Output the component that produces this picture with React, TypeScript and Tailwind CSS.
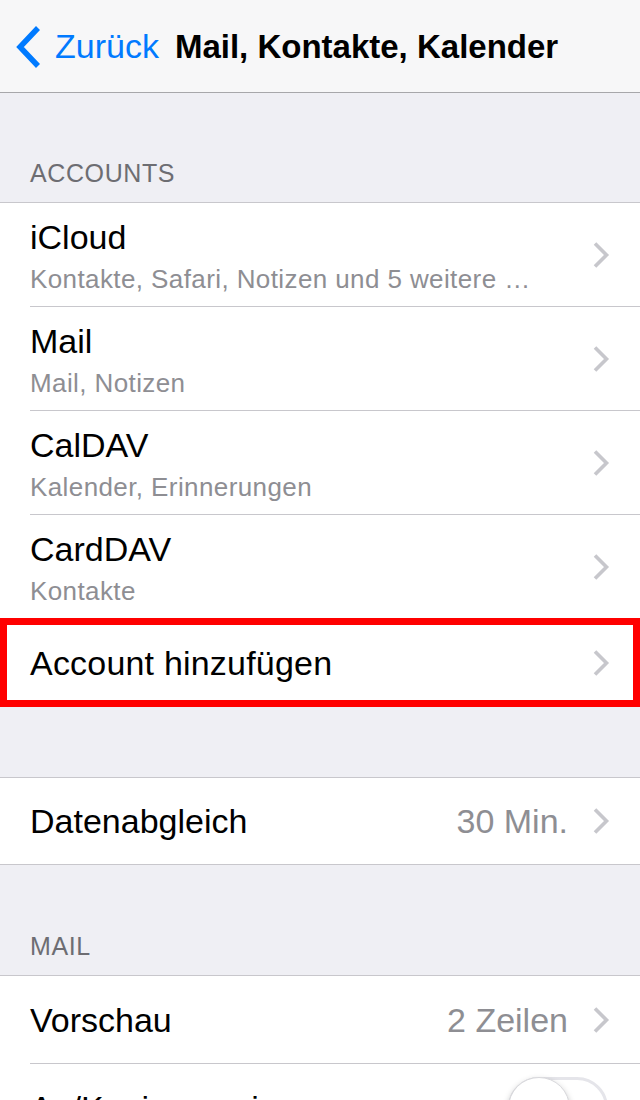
import React from "react";

const font = { fontFamily: '"Liberation Sans", Arial, sans-serif' };

function Chevron() {
  return (
    <svg width="18" height="28" viewBox="0 0 18 28" className="shrink-0">
      <path
        d="M3 2.5 L14.5 14 L3 25.5"
        fill="none"
        stroke="#c7c7cc"
        strokeWidth="3.6"
        strokeLinecap="butt"
      />
    </svg>
  );
}

function SectionHeader({ label, height }: { label?: string; height: string }) {
  return (
    <div className={`${height} bg-[#efeff4] border-b border-[#c8c7cc] flex items-end px-[30px] pb-[14px]`}>
      {label && (
        <span className="text-[25px] leading-[30px] text-[#6d6d72] tracking-[0.6px]">{label}</span>
      )}
    </div>
  );
}

interface AccountRow {
  title: string;
  sub: string;
}

const accounts: AccountRow[] = [
  { title: "iCloud", sub: "Kontakte, Safari, Notizen und 5 weitere …" },
  { title: "Mail", sub: "Mail, Notizen" },
  { title: "CalDAV", sub: "Kalender, Erinnerungen" },
  { title: "CardDAV", sub: "Kontakte" },
];

export default function App() {
  return (
    <div style={font} className="w-[640px] h-[1100px] overflow-hidden bg-[#efeff4] text-black">
      {/* nav bar */}
      <div className="h-[93px] bg-[#f7f7f8] border-b border-[#a7a7aa] flex items-center pl-[14px]">
        <svg width="30" height="44" viewBox="0 0 30 44" className="shrink-0 mt-[2px]">
          <path d="M24 3 L6 22 L24 41" fill="none" stroke="#007aff" strokeWidth="5.5" />
        </svg>
        <span className="ml-[11px] text-[34px] text-[#007aff] leading-none">Zurück</span>
        <span className="ml-[16px] text-[33px] font-bold leading-none">Mail, Kontakte, Kalender</span>
      </div>

      <SectionHeader label="ACCOUNTS" height="h-[110px]" />

      <div className="bg-white">
        {accounts.map((a) => (
          <div key={a.title} className="pl-[30px]">
            <div className="h-[104px] border-b border-[#c8c7cc] flex items-center pr-[30px]">
              <div className="flex-1 min-w-0 pt-[2px]">
                <div className="text-[34px] leading-[40px]">{a.title}</div>
                <div className="text-[26px] leading-[32px] mt-[6px] text-[#8e8e93] tracking-[0.4px]">{a.sub}</div>
              </div>
              <Chevron />
            </div>
          </div>
        ))}
        <div className="relative h-[88px] border-b border-[#c8c7cc] flex items-center pl-[30px] pr-[30px]">
          <span className="flex-1 text-[34px] leading-[40px] tracking-[0.2px]">Account hinzufügen</span>
          <Chevron />
          <div className="absolute left-0 top-[-1px] w-[640px] h-[89px] border-[7px] border-[#ff0000]" />
        </div>
      </div>

      <SectionHeader height="h-[71px]" />

      <div className="bg-white h-[87px] border-b border-[#c8c7cc] flex items-center pl-[30px] pr-[30px]">
        <span className="flex-1 text-[34px] leading-[40px]">Datenabgleich</span>
        <span className="text-[34px] leading-[40px] text-[#8e8e93] mr-[24px]">30 Min.</span>
        <Chevron />
      </div>

      <SectionHeader label="MAIL" height="h-[111px]" />

      <div className="bg-white">
        <div className="pl-[30px]">
          <div className="h-[88px] border-b border-[#c8c7cc] flex items-center pr-[30px]">
            <span className="flex-1 text-[34px] leading-[40px]">Vorschau</span>
            <span className="text-[34px] leading-[40px] text-[#8e8e93] mr-[24px]">2 Zeilen</span>
            <Chevron />
          </div>
        </div>
        <div className="h-[88px] flex items-center pl-[30px] pr-[32px]">
          <span className="flex-1 text-[34px] leading-[40px]">An/Kopie anzeigen</span>
          <div className="relative w-[100px] h-[62px] rounded-full border-[3px] border-[#e5e5ea] bg-white">
            <div className="absolute left-[-3px] top-[-3px] w-[62px] h-[62px] rounded-full bg-white border border-[#d8d8dc] shadow-[0_3px_6px_rgba(0,0,0,0.25)]" />
          </div>
        </div>
      </div>
    </div>
  );
}
